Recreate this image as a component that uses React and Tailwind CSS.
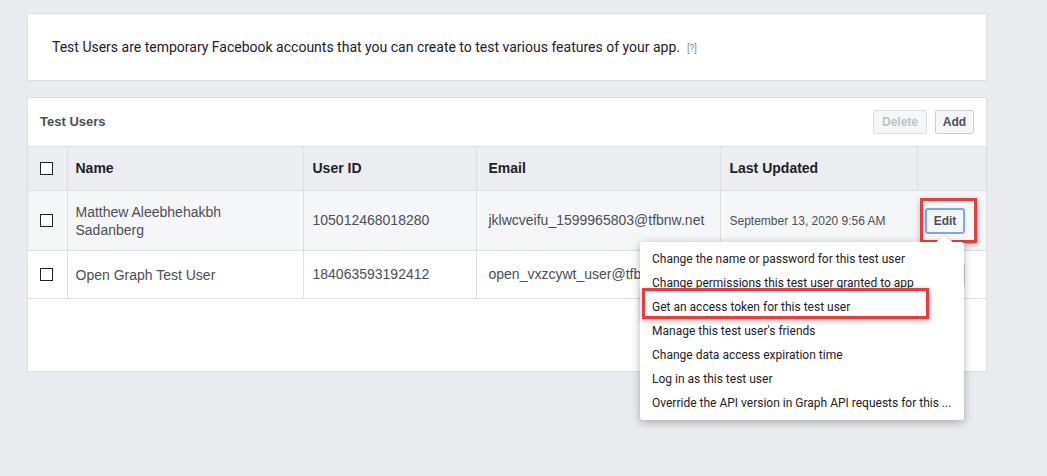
const USERS = [
  {
    name: 'Matthew Aleebhehakbh Sadanberg',
    id: '105012468018280',
    email: 'jklwcveifu_1599965803@tfbnw.net',
    updated: 'September 13, 2020 9:56 AM',
  },
  {
    name: 'Open Graph Test User',
    id: '184063593192412',
    email: 'open_vxzcywt_user@tfbnw.net',
    updated: '',
  },
]

const MENU = [
  'Change the name or password for this test user',
  'Change permissions this test user granted to app',
  'Get an access token for this test user',
  "Manage this test user's friends",
  'Change data access expiration time',
  'Log in as this test user',
  'Override the API version in Graph API requests for this ...',
]

function Box() {
  return <span className="block h-[13px] w-[13px] border-[1.5px] border-[#1d2129] bg-white" />
}

export default function App() {
  return (
    <div className="relative min-h-[476px] w-[1047px] bg-[#e9ebee] pt-[13px] font-['Liberation_Sans',Arial,sans-serif]">
      {/* intro card */}
      <div className="ml-[27px] flex h-[68px] w-[960px] items-center border border-[#dddfe2] bg-white pl-[24px]">
        <p className="font-['Roboto',sans-serif] text-[14px] text-[#1d2129]">
          Test Users are temporary Facebook accounts that you can create to test various features of your app.
          <span className="ml-[7px] text-[10px] text-[#90949c]">[?]</span>
        </p>
      </div>

      {/* table card */}
      <div className="ml-[27px] mt-[16px] h-[275px] w-[960px] border border-[#dddfe2] bg-white">
        <div className="flex h-[48px] items-center justify-between pl-[12px] pr-[12px]">
          <h2 className="text-[13px] font-bold text-[#4b4f56]">Test Users</h2>
          <div className="flex gap-[8px]">
            <button className="h-[24px] w-[54px] rounded-[2px] border border-[#dddfe2] bg-[#f5f6f7] text-[12px] font-bold text-[#bec3c9]">Delete</button>
            <button className="h-[24px] w-[39px] rounded-[2px] border border-[#ccd0d5] bg-[#f5f6f7] text-[12px] font-bold text-[#4b4f56]">Add</button>
          </div>
        </div>
        <table className="w-full table-fixed border-collapse">
          <colgroup>
            <col className="w-[39px]" />
            <col className="w-[236px]" />
            <col className="w-[173px]" />
            <col className="w-[244px]" />
            <col className="w-[197px]" />
            <col />
          </colgroup>
          <thead>
            <tr className="h-[44px] border-y border-[#dddfe2] bg-[#ebedf0] text-left text-[14px] font-bold text-[#1d2129]">
              <th className="pl-[12px]"><Box /></th>
              <th className="border-l border-[#dddfe2] pl-[8px]">Name</th>
              <th className="border-l border-[#dddfe2] pl-[9px]">User ID</th>
              <th className="border-l border-[#dddfe2] pl-[12px]">Email</th>
              <th className="border-l border-[#dddfe2] pl-[9px]">Last Updated</th>
              <th className="border-l border-[#dddfe2]" />
            </tr>
          </thead>
          <tbody className="text-[14px] text-[#4b4f56]">
            {USERS.map((u, i) => (
              <tr key={u.id} className={`${i === 0 ? 'h-[60px] bg-[#f5f6f7]' : 'h-[48px] bg-white'} border-b border-[#dddfe2]`}>
                <td className="pl-[12px]"><Box /></td>
                <td className="border-l border-[#dddfe2] pl-[8px] pr-[40px] leading-[18px]">{u.name}</td>
                <td className="border-l border-[#dddfe2] pl-[9px]">{u.id}</td>
                <td className="whitespace-nowrap border-l border-[#dddfe2] pl-[12px]">{u.email}</td>
                <td className="whitespace-nowrap border-l border-[#dddfe2] pl-[9px] text-[12px]">{u.updated}</td>
                <td className="pl-[8px]">
                  <button
                    className={`h-[26px] w-[40px] rounded-[3px] bg-[#f5f6f7] text-[12px] font-bold text-[#4b4f56] ${
                      i === 0 ? 'border-2 border-[#7ba4f2]' : 'border border-[#ccd0d5]'
                    }`}
                  >
                    Edit
                  </button>
                </td>
              </tr>
            ))}
          </tbody>
        </table>
      </div>

      {/* highlight around Edit */}
      <div className="pointer-events-none absolute left-[920px] top-[198px] h-[45px] w-[57px] border-[3px] border-[#ec3b3f] shadow-[0_2px_6px_rgba(0,0,0,0.25)]" />

      {/* dropdown menu */}
      <div className="absolute left-[640px] top-[242px] w-[324px] rounded-[3px] bg-white py-[5px] font-['Roboto',sans-serif] shadow-[0_2px_8px_rgba(0,0,0,0.3)]">
        <span className="absolute right-[14px] top-[-6px] h-[11px] w-[11px] rotate-45 border-l border-t border-[#dddfe2] bg-white" />
        {MENU.map((m) => (
          <div key={m} className="flex h-[24px] items-center px-[12px] text-[12px] text-[#1d2129]">
            {m}
          </div>
        ))}
        <div className="pointer-events-none absolute left-[2px] top-[46px] h-[31px] w-[287px] border-[3px] border-[#ec3b3f] shadow-[0_2px_6px_rgba(0,0,0,0.25)]" />
      </div>
    </div>
  )
}
